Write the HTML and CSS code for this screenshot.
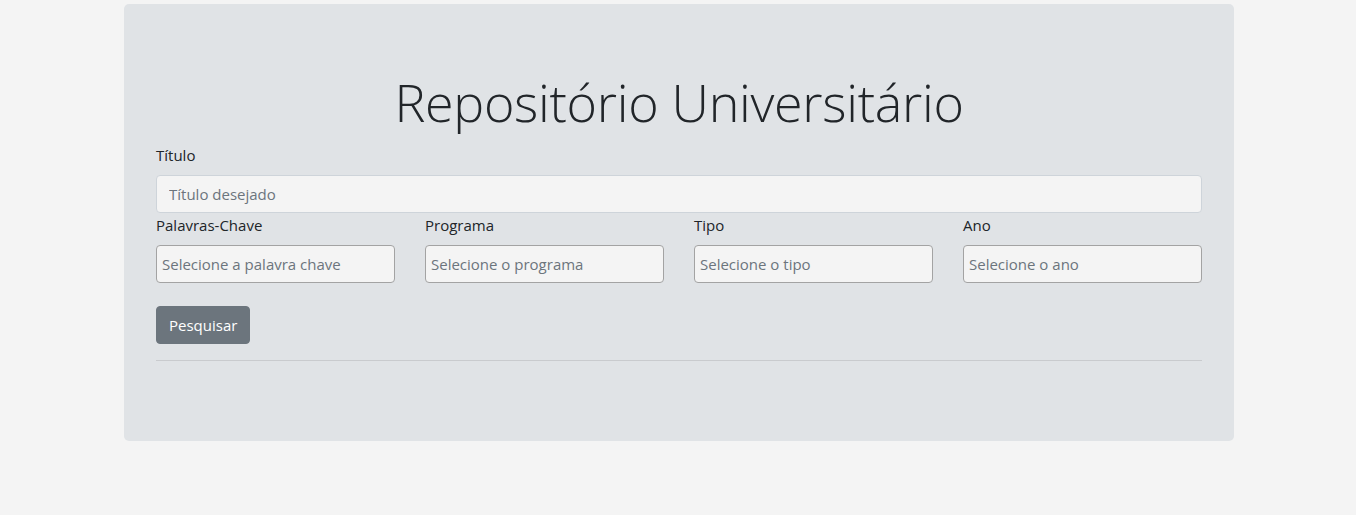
FILE: index.html
```html
<!DOCTYPE html>
<html lang="pt-BR">
<head>
<meta charset="utf-8">
<title>Repositório Universitário</title>
<link rel="stylesheet" href="styles.css">
</head>
<body>
<div class="container">
  <div class="jumbotron">
    <h1 class="display">Repositório Universitário</h1>
    <form class="search-form">
      <div class="field">
        <label for="titulo">Título</label>
        <input id="titulo" class="input input-light" type="text" placeholder="Título desejado">
      </div>
      <div class="row">
        <div class="col">
          <label for="palavra">Palavras-Chave</label>
          <input id="palavra" class="input input-select" type="text" placeholder="Selecione a palavra chave">
        </div>
        <div class="col">
          <label for="programa">Programa</label>
          <input id="programa" class="input input-select" type="text" placeholder="Selecione o programa">
        </div>
        <div class="col">
          <label for="tipo">Tipo</label>
          <input id="tipo" class="input input-select" type="text" placeholder="Selecione o tipo">
        </div>
        <div class="col">
          <label for="ano">Ano</label>
          <input id="ano" class="input input-select" type="text" placeholder="Selecione o ano">
        </div>
      </div>
      <button type="button" class="btn">Pesquisar</button>
    </form>
    <hr class="divider">
  </div>
</div>
</body>
</html>
```
FILE: styles.css
```css
* { box-sizing: border-box; }
html, body { margin: 0; padding: 0; }
body {
  background: #f4f4f4;
  font-family: "Open Sans", "Noto Sans", sans-serif;
  font-size: 15px;
  line-height: 24px;
  color: #212529;
}
.container {
  width: 1140px;
  margin: 0 auto;
  padding: 4px 14px 0 16px;
}
.jumbotron {
  background: #e0e3e6;
  border-radius: 5px;
  padding: 64px 32px 64px;
}
.display {
  margin: 0 0 8px;
  font-size: 52px;
  font-weight: 300;
  line-height: 67px;
  text-align: center;
  color: #212529;
  letter-spacing: -0.3px;
}
.search-form { margin: 0; }
label {
  display: block;
  margin-bottom: 8px;
  line-height: 24px;
}
.input {
  display: block;
  width: 100%;
  height: 38px;
  background: #f4f4f4;
  font-family: inherit;
  font-size: 15px;
  color: #495057;
  border-radius: 4px;
  outline: none;
}
.input::placeholder { color: #6c757d; opacity: 1; }
.input-light {
  border: 1px solid #ced4da;
  padding: 6px 12px;
}
.input-select {
  border: 1px solid #a3a3a3;
  padding: 6px 5px;
}
.row {
  display: grid;
  grid-template-columns: repeat(4, 1fr);
  column-gap: 30px;
}
.btn {
  display: block;
  margin-top: 23px;
  height: 38px;
  padding: 0 12px;
  background: #6c757d;
  color: #fff;
  border: 1px solid #6c757d;
  border-radius: 4px;
  font-family: inherit;
  font-size: 15px;
  line-height: 24px;
  cursor: pointer;
}
.divider {
  margin: 16px 0;
  border: 0;
  border-top: 1px solid rgba(0,0,0,0.1);
}
```
